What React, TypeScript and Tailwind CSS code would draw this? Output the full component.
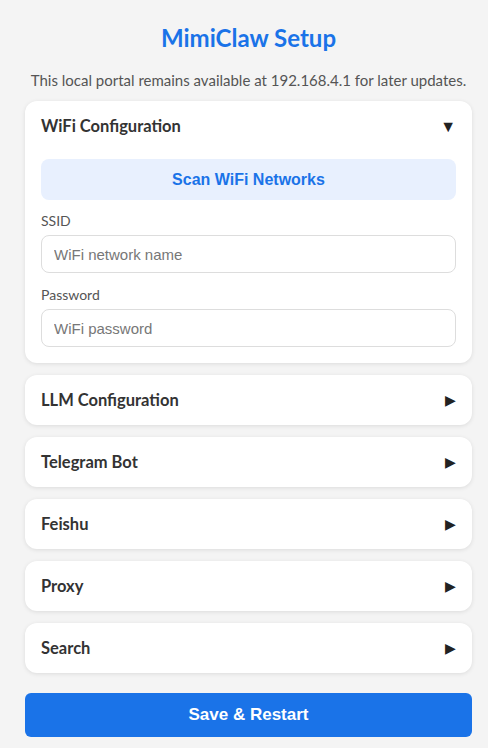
const sections = ['LLM Configuration', 'Telegram Bot', 'Feishu', 'Proxy', 'Search'];

function SectionHeader({title, open}: {title: string; open?: boolean}) {
    return (
        <div className="flex h-[50px] items-center justify-between px-4">
            <span className="text-[16.5px] font-bold text-[#333]">{title}</span>
            <span className={open ? 'text-[16px] leading-none text-[#222]' : 'text-[14px] leading-none text-[#222]'}>
                {open ? '▼' : '▶'}
            </span>
        </div>
    );
}

export default function App() {
    return (
        <main className="min-h-[748px] bg-[#f4f4f4] font-['Lato',sans-serif] text-[#333]">
            <div className="ml-[25px] mr-[16px] flex flex-col pt-[22px]">
                <h1 className="text-center text-[24px] font-bold leading-[32px] text-[#1a73e8]">
                    MimiClaw Setup
                </h1>
                <p className="mt-[16px] text-center text-[15px] leading-[20px] text-[#555] -mx-[4px]">
                    This local portal remains available at 192.168.4.1 for later updates.
                </p>
                <div className="mt-[11px] flex flex-col gap-[12px]">
                    <section className="rounded-[12px] bg-white pb-[16px] shadow-[0_1px_4px_rgba(0,0,0,0.1)]">
                        <SectionHeader title="WiFi Configuration" open />
                        <div className="flex flex-col px-4 pt-[8px]">
                            <button className="h-[41px] rounded-[8px] bg-[#e8f0fe] font-['Liberation_Sans',sans-serif] text-[16px] font-bold text-[#1a73e8]">
                                Scan WiFi Networks
                            </button>
                            <label className="mt-[13px] text-[14px] leading-[16px] text-[#555]">SSID</label>
                            <input
                                className="mt-[6px] h-[38px] rounded-[8px] border border-[#ddd] px-3 font-['Liberation_Sans',sans-serif] text-[15px] placeholder:text-[#777] outline-none"
                                placeholder="WiFi network name"
                            />
                            <label className="mt-[14px] text-[14px] leading-[16px] text-[#555]">Password</label>
                            <input
                                className="mt-[6px] h-[38px] rounded-[8px] border border-[#ddd] px-3 font-['Liberation_Sans',sans-serif] text-[15px] placeholder:text-[#777] outline-none"
                                placeholder="WiFi password"
                                type="password"
                            />
                        </div>
                    </section>
                    {sections.map(title => (
                        <section
                            key={title}
                            className="rounded-[12px] bg-white shadow-[0_1px_4px_rgba(0,0,0,0.1)]"
                        >
                            <SectionHeader title={title} />
                        </section>
                    ))}
                </div>
                <button className="mt-[20px] h-[44px] rounded-[6px] bg-[#1a73e8] font-['Liberation_Sans',sans-serif] text-[17px] font-bold text-white">
                    Save &amp; Restart
                </button>
            </div>
        </main>
    );
}
